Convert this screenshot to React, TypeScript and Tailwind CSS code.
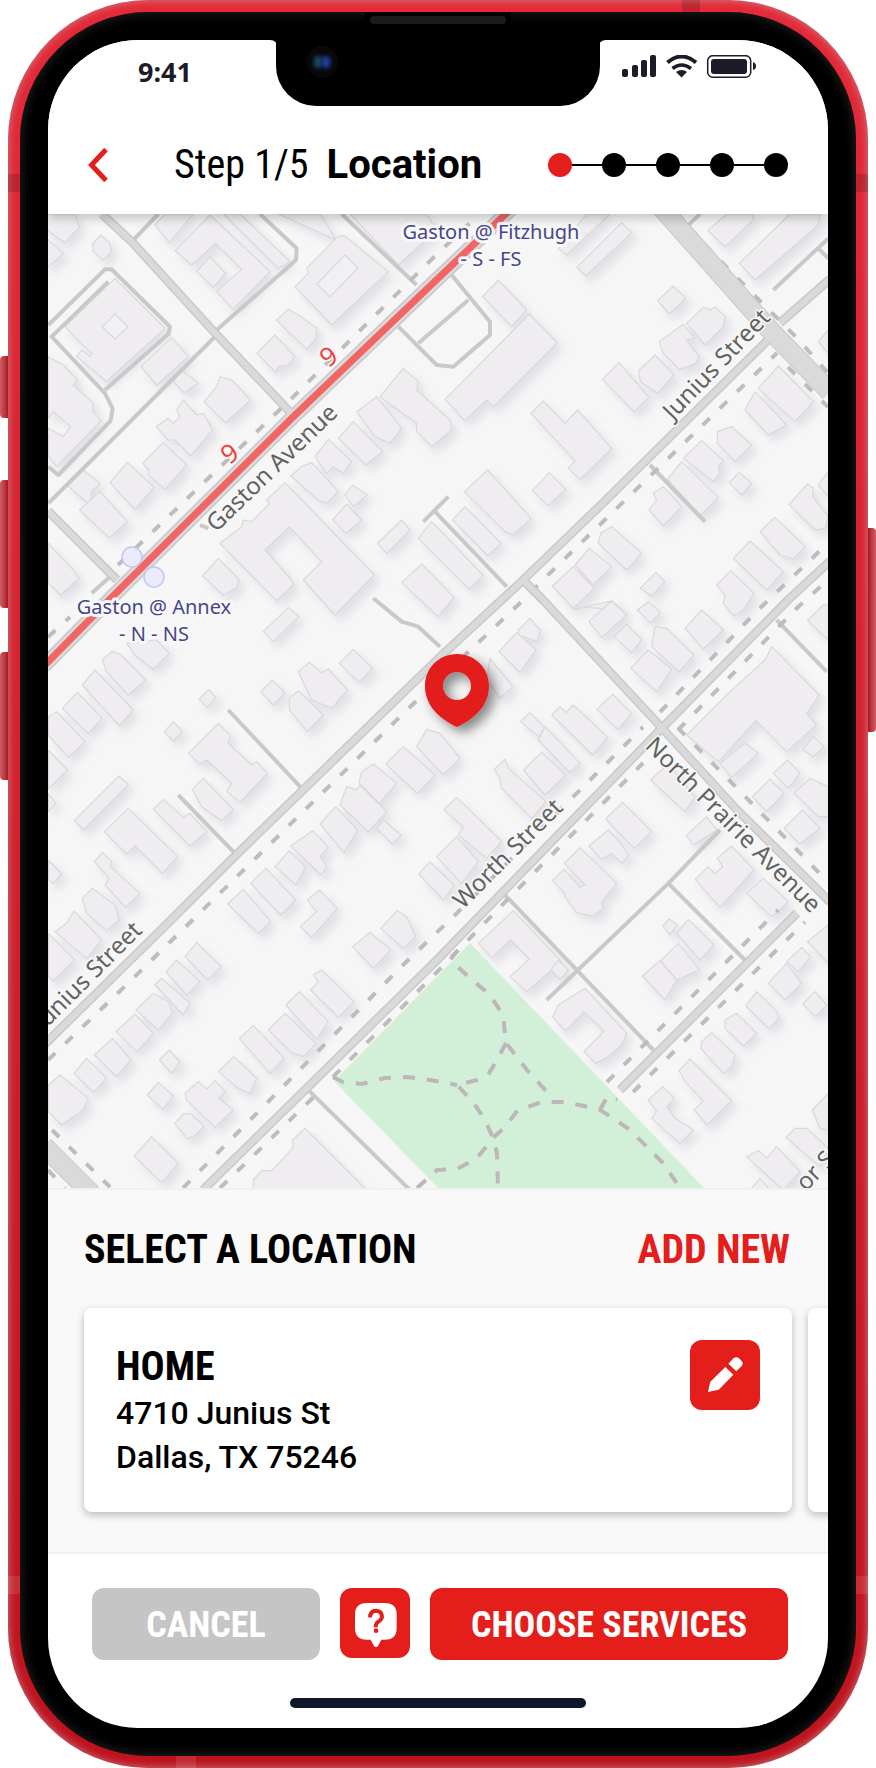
import React from "react";

const CONDENSED = "font-['Roboto_Condensed','Roboto',sans-serif]";

type Tile = { x: number; y: number; shapes: string[]; roads: string[] };

// Street blocks, one entry per map tile. Shapes are in tile units (3 per map unit).
const tiles: Tile[] = [
  {
    x: 40,
    y: 210,
    shapes: [
      "20,12 105,12 118,52 75,98 20,60",
      "20,85 70,130 20,175",
      "182,75 208,98 215,125 190,150 160,125 158,102",
      "225,205 375,355 215,500 200,515 110,440 125,420 150,440 158,430 122,400 75,350",
      "395,382 445,440 350,525 303,470",
      "425,480 475,520 432,548 400,515",
      "345,45 375,12 460,12 388,98",
      "510,15 690,185 580,298 530,245 605,178 527,100 455,165 405,122",
      "510,140 557,190 520,232 470,185",
      "600,12 750,155 715,175 550,12",
      "715,12 840,12 885,85 910,75 1045,185 875,345 765,230 805,190 800,175 885,88",
      "930,12 1160,12 1190,60 1075,165",
      "745,298 775,315 830,355 828,385 800,418 740,360 710,330",
      "705,375 765,440 745,465 715,470 708,488 650,430",
      "540,500 575,510 632,570 557,638 492,575 530,530",
      "430,570 470,615 490,610 518,660 452,738 405,690 385,690 348,650 385,625 400,640 420,620 410,600",
      "370,697 440,765 375,838 325,795 325,780 308,760",
      "262,757 342,832 285,898 210,818",
      "130,780 180,820 155,845 150,885 80,825",
      "180,845 262,935 208,983 118,900",
      "25,440 70,465 112,510 100,525 160,580 158,605 183,632 50,770 25,740 25,655 70,680 92,650 40,605 25,625",
      "25,1000 100,1080 118,1105 62,1155 25,1120",
      "1090,475 1135,515 1130,540 1230,630 1235,660 1175,710 1130,665 1130,640 1020,560",
      "1010,560 1085,655 1050,700 1005,680 950,605",
      "940,635 1028,725 978,765 895,685",
      "865,688 935,755 910,790 880,770 860,790 825,740",
      "815,758 895,845 860,880 835,870 752,798 785,770",
      "735,818 1003,1095 885,1215 790,1110 845,1055 748,950 675,1020 755,1110 760,1125 710,1172 540,1000 605,950 610,930 635,935 688,880 680,870",
      "937,825 982,855 940,890 915,855",
      "920,882 965,930 918,970 878,930",
      "535,1045 598,1110 588,1135 550,1155 488,1098",
      "1085,930 1110,960 1040,1030 1012,1000",
      "1145,1062 1242,1162 1195,1220 1085,1118",
    ],
    roads: [
      "25,345 195,178 215,178 390,350 385,372 195,540",
      "205,215 35,380 195,550 218,595 212,632 55,795 25,770",
      "660,12 770,115 768,150 530,360",
      "280,90 355,12",
      "905,12 1130,225",
      "525,380 440,465 25,880",
      "1075,350 1170,445 1190,465 1240,470 1350,375 1350,335 1235,195",
      "1135,400 1285,270",
      "1150,935 1225,860",
      "1185,905 1400,1130",
      "155,1150 210,1100",
      "480,945 505,955",
      "1000,1165 1085,1235 1135,1250 1200,1310",
    ],
  },
  {
    x: 430,
    y: 210,
    shapes: [
      "205,210 290,300 245,350 158,260",
      "298,312 382,398 190,590 170,570 105,632 45,568",
      "470,12 540,12 410,135 385,115",
      "575,38 605,68 468,198 440,172",
      "730,228 767,265 718,312 683,272",
      "820,292 840,300 855,290 885,320 880,350 825,405 770,340",
      "760,343 795,385 768,390 808,440 795,462 748,478 700,430 688,395",
      "675,435 732,495 682,550 632,515 625,482",
      "567,458 657,562 612,605 518,508",
      "340,573 405,640 443,600 545,715 450,808 415,775 435,752 303,610",
      "358,788 407,838 355,887 307,842",
      "173,780 303,925 250,975 225,965 103,845",
      "105,890 213,1000 173,1037 68,930",
      "5,935 160,1097 118,1138 -35,985",
      "545,950 635,1030 590,1080 505,1000 512,970",
      "478,1015 545,1070 490,1125 435,1065",
      "430,1070 493,1135 430,1195 367,1128",
      "678,1088 705,1115 665,1158 630,1135",
      "1045,468 1150,575 1095,635 985,535",
      "975,545 1070,645 1015,675 945,600",
      "905,650 965,705 915,755 862,700 862,665",
      "815,692 880,752 865,770 870,790 850,815 760,745",
      "755,755 865,862 810,918 712,808",
      "700,830 755,890 700,948 657,900 680,870 670,850",
      "928,787 965,820 935,855 897,818",
      "1133,822 1150,835 1148,860 1195,920 1185,955 1155,960 1077,883",
      "1035,922 1125,1010 1090,1047 1050,1035 990,965",
      "960,993 1060,1085 1010,1140 910,1045",
      "903,1082 972,1150 940,1200 910,1217 880,1180 885,1155 860,1125",
      "1080,12 1170,12 1165,45 975,210 928,160",
      "890,12 970,12 970,30 885,110 833,62",
      "1195,360 1165,395 1195,430",
      "1195,785 1165,825 1195,860",
      "545,1173 575,1200 435,1190 430,1198",
    ],
    roads: ["660,765 825,935", "1030,240 1195,85", "1165,115 1195,145", "770,50 810,12"],
  },
  {
    x: 40,
    y: 600,
    shapes: [
      "260,130 350,120 388,160 340,208 285,165",
      "215,155 240,162 317,240 265,285 200,215 187,180",
      "165,210 280,330 238,377 127,255",
      "112,277 187,355 145,400 67,325",
      "50,335 135,425 85,472 25,405 25,350",
      "25,450 82,510 25,568",
      "25,580 48,610 25,635",
      "25,780 65,822 40,850 25,840",
      "745,22 777,50 700,125 670,95",
      "940,148 998,205 957,247 898,190",
      "808,187 845,218 865,207 922,270 875,325 815,300 775,215",
      "775,272 850,345 802,395 748,330 748,295",
      "697,240 735,278 700,315 662,275",
      "507,268 527,293 503,323 477,298",
      "400,365 427,395 400,423 373,395",
      "535,370 570,405 565,430 635,495 650,485 682,520 600,607 560,575 575,550 500,480 480,493 445,460",
      "490,535 580,630 545,662 485,620 457,568",
      "370,598 430,652 450,640 500,695 450,738 340,628",
      "237,528 265,555 130,690 103,662",
      "265,625 413,770 367,820 285,738 260,762 193,695",
      "187,757 215,785 210,800 300,880 257,922 195,855 208,835 163,785",
      "157,865 225,915 238,960 200,992 140,940 127,895",
      "102,933 185,1020 140,1075 45,995 80,970",
      "25,1000 105,1080 40,1143 25,1130",
      "1160,388 1200,400 1260,475 1210,525 1130,440",
      "1090,440 1185,525 1132,580 1037,492",
      "1000,492 1070,550 1018,610 957,548 965,515",
      "920,560 950,570 960,555 1040,635 985,695 900,615",
      "887,620 953,690 912,758 840,672",
      "1030,660 1083,705 1058,733 1010,685",
      "818,692 865,742 840,770 860,800 843,825 752,738",
      "748,752 797,800 768,855 705,800",
      "678,805 767,900 722,945 632,850",
      "610,868 692,965 655,1000 563,912",
      "838,870 892,925 815,1012 780,980 830,935 802,900",
      "1072,932 1100,950 1127,1010 1090,1045 1022,985",
      "990,997 1053,1050 1000,1105 938,1040",
      "1170,785 1242,855 1210,900 1137,822",
      "470,1028 543,1100 503,1140 435,1070",
    ],
    roads: ["565,330 785,565", "415,585 585,760"],
  },
  {
    x: 430,
    y: 600,
    shapes: [
      "300,55 330,90 322,125 265,105 265,90",
      "260,98 318,150 270,218 207,155",
      "180,175 248,260 210,295 170,240",
      "300,338 345,385 325,410 272,365",
      "345,380 450,490 420,518 325,420",
      "335,457 408,525 345,585 280,510",
      "225,478 235,505 348,605 305,655 215,565 210,535 192,508",
      "430,315 533,412 488,465 365,345 390,320 408,338",
      "548,283 605,340 565,388 500,328",
      "80,592 215,725 170,775 85,705 100,680 42,630",
      "80,710 145,785 95,850 20,770",
      "545,3 590,45 515,112 477,65",
      "590,73 635,118 605,158 552,110",
      "655,5 692,38 660,68 622,30",
      "675,80 710,85 792,165 748,215 665,140",
      "655,150 725,208 680,275 602,205",
      "815,30 880,90 820,147 765,85",
      "1180,15 1195,15 1195,120 1132,62",
      "1025,140 1168,285 1130,340 1160,375 1070,455 978,362 865,485 770,405 900,275 1005,180",
      "945,430 985,460 905,533 870,490",
      "1150,410 1183,440 1150,470 1118,450",
      "1073,480 1110,520 1075,565 1030,520",
      "1020,537 1062,580 1010,635 967,590",
      "1140,535 1195,560 1195,650 1165,650 1092,580",
      "1118,630 1170,685 1110,732 1062,685",
      "715,490 795,590 765,635 662,540",
      "830,650 860,690 790,735 768,708",
      "578,607 665,695 613,745 527,657",
      "535,690 568,725 595,765 577,790 545,760 515,778 477,738",
      "450,743 560,850 515,905 520,925 490,948 440,938 405,890 405,880 367,842 402,808 450,862 465,855 403,790",
      "905,738 972,810 870,922 795,838 835,800 855,822 878,800 862,775",
      "1000,835 1075,905 1025,950 950,880",
      "775,958 852,1035 810,1080 740,1000",
      "718,957 742,975 720,1005 698,978",
      "745,1030 808,1110 740,1140 692,1082",
      "690,1082 740,1140 705,1200 637,1128",
      "250,932 395,1085 290,1175 240,1130 298,1077 242,1020 185,1072 145,1030",
      "1115,1042 1142,1070 1105,1115 1070,1085",
      "1070,1090 1115,1150 1065,1200 1015,1150",
      "1195,975 1132,1025 1195,1090",
    ],
    roads: ["1040,60 1190,215", "220,880 445,1115 670,1350", "870,690 715,850 350,1200", "715,850 945,1080"],
  },
  {
    x: 40,
    y: 960,
    shapes: [
      "410,0 480,65 440,105 378,35",
      "365,55 450,130 430,165 345,75",
      "340,100 385,125 397,160 355,210 288,150",
      "285,162 340,220 290,275 228,215",
      "218,235 273,300 230,350 163,285",
      "140,295 200,355 160,397 102,340",
      "60,345 145,415 130,450 65,495 25,455 25,375",
      "388,270 420,305 395,340 358,300",
      "355,367 400,408 368,448 322,405",
      "845,30 942,125 895,172 812,90 835,65 820,45",
      "778,95 865,185 830,238 738,135",
      "735,160 828,250 790,290 755,278 685,210",
      "640,197 733,295 690,340 598,235",
      "582,290 650,355 630,400 595,385 535,335",
      "475,365 500,388 525,362 557,395 535,415 580,450 525,502 440,420 435,400",
      "430,460 455,462 492,500 460,530 440,535 405,490",
      "335,530 415,610 365,668 283,588",
      "795,505 980,690 640,690 640,660 665,632 695,632 758,565 758,540",
    ],
    roads: ["800,385 1110,690"],
  },
  {
    x: 430,
    y: 900,
    shapes: [
      "465,265 590,400 575,435 535,470 497,490 462,455 522,393 462,335 405,393 368,350 385,315",
      "385,180 415,210 390,238 363,210",
      "1155,275 1190,315 1158,350 1118,312",
      "980,275 1040,335 1045,355 1018,387 947,318",
      "920,340 980,400 940,438 885,385 885,360",
      "845,398 915,465 905,500 880,520 812,445 815,425",
      "780,477 905,602 832,675 792,630 820,602 765,545 747,512",
      "698,560 733,595 710,620 735,655 790,690 750,730 665,655 680,635 655,600",
      "1195,580 1147,630 1170,685 1195,690",
      "1095,685 1130,685 1195,745 1170,800 1068,712",
      "1040,740 1110,815 1060,870 950,770 985,752 1010,775",
      "990,835 1020,870 960,870",
    ],
    roads: [],
  },
];

const courtyards = ["115,314 128,327 115,339 102,327", "345,255 358,268 330,297 317,284"];

const streets = [
  "102,214 133,243 215,333 290,412",
  "48,511 117,580",
  "44,1045 165,926 235,856 302,791 440,657 520,583 603,503 773,335",
  "203,1190 307,1088 437,960 662,728 788,600 830,561",
  "620,1090 797,913",
  "523,580 543,600 662,728 737,810 815,887 830,902",
  "780,323 830,279",
];

const avenues = ["660,206 770,330 830,392", "44,1146 92,1194"];

const gaston = "44,666 106,603 293,417 430,286 512,208";

const sidewalks = [
  "118,565 295,395 433,258 475,218",
  "48,637 70,617",
  "48,1060 118,993 410,707 518,605 550,573 777,353",
  "788,367 828,407",
  "687,227 757,298 797,338 828,373",
  "183,1188 403,965 455,915 643,727",
  "660,712 758,610 828,543",
  "220,1188 323,1088",
  "333,1077 437,972 507,900 643,763",
  "678,730 798,607 828,580",
  "678,728 732,783 800,853 823,877",
  "607,1082 778,910",
  "633,1092 805,922",
  "52,1130 110,1187",
  "48,1170 65,1188",
];

const parkPaths = [
  "333,1077 343,1082 362,1084 385,1078 407,1077 430,1080 457,1085",
  "458,950 450,960 470,978 490,995 503,1015 506,1043 527,1070 547,1092 554,1099",
  "506,1043 497,1060 488,1075 477,1080 457,1085 473,1102 485,1120 493,1138 497,1153 498,1188",
  "417,1188 437,1170 457,1169 477,1158 493,1138 505,1127 518,1110 542,1102 565,1102 588,1107 600,1110 613,1118 630,1130 647,1147 663,1163 678,1185",
  "600,1110 607,1097 617,1100",
];

const streetNames = [
  { text: "Gaston Avenue", x: 216, y: 533, angle: -44 },
  { text: "Junius Street", x: 673, y: 421, angle: -46 },
  { text: "Worth Street", x: 463, y: 910, angle: -45 },
  { text: "North Prairie Avenue", x: 644, y: 747, angle: 45 },
  { text: "Junius Street", x: 43, y: 1032, angle: -45 },
  { text: "or Street", x: 806, y: 1192, angle: -46 },
];

const stops = [
  { name: "Gaston @ Fitzhugh", suffix: "- S - FS", x: 491, y: 239 },
  { name: "Gaston @ Annex", suffix: "- N - NS", x: 154, y: 614 },
];

function StreetMap() {
  return (
    <svg
      viewBox="48 214 780 974"
      preserveAspectRatio="xMidYMid slice"
      className="block h-full w-full font-['Noto_Sans',sans-serif]"
      role="img"
      aria-label="Map around 4710 Junius St"
    >
      <defs>
        <filter id="soft" x="-5%" y="-5%" width="110%" height="110%">
          <feDropShadow dx="16" dy="18" stdDeviation="12" floodColor="#9a9ab8" floodOpacity="0.24" />
        </filter>
        <filter id="pin-shadow" x="-50%" y="-50%" width="220%" height="220%">
          <feDropShadow dx="6" dy="6" stdDeviation="6" floodColor="#000" floodOpacity="0.45" />
        </filter>
      </defs>
      <rect x="48" y="214" width="780" height="974" fill="#f6f6f6" />
      {tiles.map((t) => (
        <g key={`${t.x}-${t.y}`} transform={`translate(${t.x} ${t.y}) scale(0.33333)`} filter="url(#soft)">
          {t.shapes.map((s) => (
            <polygon key={s} points={s} fill="#efedef" stroke="#dad8da" strokeWidth="3.5" strokeLinejoin="round" />
          ))}
        </g>
      ))}
      {courtyards.map((c) => (
        <polygon key={c} points={c} fill="#f1f1f3" stroke="#dad8da" strokeWidth="1.2" />
      ))}
      <polygon points="470,943 706,1190 440,1190 334,1081" fill="#d2f0d7" />
      {tiles.map((t) => (
        <g
          key={`${t.x}-${t.y}`}
          transform={`translate(${t.x} ${t.y}) scale(0.33333)`}
          fill="none"
          stroke="#c9c9c9"
          strokeWidth="12"
          strokeLinejoin="round"
        >
          {t.roads.map((r) => (
            <polyline key={r} points={r} />
          ))}
        </g>
      ))}
      <g fill="none" stroke="#bdbdbd" strokeWidth="4" strokeDasharray="10 14">
        {sidewalks.map((s) => (
          <polyline key={s} points={s} />
        ))}
      </g>
      <g fill="none" stroke="#bdb6ba" strokeWidth="4" strokeDasharray="12 12">
        {parkPaths.map((s) => (
          <polyline key={s} points={s} />
        ))}
      </g>
      <g fill="none" stroke="#c9c9c9" strokeLinejoin="round">
        {streets.map((s) => (
          <polyline key={s} points={s} strokeWidth="9" />
        ))}
        {avenues.map((s) => (
          <polyline key={s} points={s} strokeWidth="20" />
        ))}
        <polyline points={gaston} strokeWidth="15" />
      </g>
      <g fill="none" stroke="#dadada" strokeLinejoin="round">
        {streets.map((s) => (
          <polyline key={s} points={s} strokeWidth="6" />
        ))}
        {avenues.map((s) => (
          <polyline key={s} points={s} strokeWidth="18" />
        ))}
        <polyline points={gaston} strokeWidth="12" />
      </g>
      <polyline points={gaston} fill="none" stroke="#f16565" strokeWidth="7" />
      <g fill="#ebebfc" stroke="#c5c5f4" strokeWidth="1.5">
        <circle cx="132" cy="557" r="10" />
        <circle cx="154" cy="577" r="10" />
      </g>
      <g stroke="#f8f8f8" strokeWidth="3" strokeLinejoin="round" paintOrder="stroke">
        {streetNames.map((n) => (
          <text key={`${n.text}${n.x}`} transform={`translate(${n.x} ${n.y}) rotate(${n.angle})`} fontSize="24" fill="#626262">
            {n.text}
          </text>
        ))}
        <g fontSize="26" fill="#ef4040" textAnchor="middle">
          <text transform="translate(334 364) rotate(-36)">9</text>
          <text transform="translate(235 461) rotate(-36)">9</text>
        </g>
        <g fontSize="20" fill="#46468a" textAnchor="middle" strokeWidth="6">
          {stops.map((s) => (
            <text key={s.name} x={s.x} y={s.y}>
              {s.name}
              <tspan x={s.x} dy="27">
                {s.suffix}
              </tspan>
            </text>
          ))}
        </g>
      </g>
      <path
        d="M457 654c-18 0-32 14-32 32 0 20 15 33 32 41 17-8 32-21 32-41 0-18-14-32-32-32zm0 18a14 14 0 1 1 0 28 14 14 0 0 1 0-28z"
        fill="#e31e1b"
        fillRule="evenodd"
        filter="url(#pin-shadow)"
      />
    </svg>
  );
}

function StatusIcons() {
  return (
    <svg viewBox="0 0 136 24" className="h-6 w-[136px]" aria-hidden="true">
      <g fill="#1c1c28">
        <rect x="0" y="14" width="6" height="8" rx="2" />
        <rect x="10" y="10" width="6" height="12" rx="2" />
        <rect x="19" y="5" width="6" height="17" rx="2" />
        <rect x="28" y="0" width="6" height="22" rx="2" />
        <path d="M54 17q6-4 11 0l-5.500 5.500z" />
        <rect x="89" y="4" width="36" height="15" rx="3" />
        <path d="M131 7q3 1 3 4t-3 4z" />
      </g>
      <g fill="none" stroke="#1c1c28">
        <path d="M45.500 7.500q14-12 28.500 0" strokeWidth="4" />
        <path d="M50.500 13.500q9-7 18.500 0" strokeWidth="3.600" />
        <rect x="85.700" y="0.700" width="43" height="21.600" rx="5" strokeWidth="1.500" />
      </g>
    </svg>
  );
}

function Notch() {
  return (
    <div className="absolute top-0 left-1/2 z-30 h-[66px] w-[324px] -translate-x-1/2 rounded-b-[40px] bg-black">
      <svg viewBox="0 0 336 8" className="absolute top-0 -left-1.5 h-2 w-[336px]" aria-hidden="true">
        <path d="M0 0h8v8Q7 0 0 0zM336 0h-8v8q1-8 8-8z" fill="#000" />
      </svg>
      <div className="absolute top-1.5 left-[30px] flex size-8 items-center justify-center rounded-full bg-[#08080a]">
        <span className="h-3 w-2 rounded-full bg-[#1b4a66] blur-[2px]" />
        <span className="h-3 w-2 rounded-full bg-[#2440a8] blur-[2px]" />
      </div>
    </div>
  );
}

function Steps() {
  return (
    <ol className="flex items-center" aria-label="Step 1 of 5">
      {[1, 2, 3, 4, 5].map((n) => (
        <li key={n} className="flex items-center">
          {n > 1 && <span className="h-0.5 w-[30px] bg-black" />}
          <span className={n === 1 ? "size-6 rounded-full bg-[#e31e1b]" : "size-6 rounded-full bg-black"} />
        </li>
      ))}
    </ol>
  );
}

export default function App() {
  const card =
    "flex w-full shrink-0 items-start justify-between rounded-lg bg-white p-8 shadow-[0_3px_8px_rgba(0,0,0,0.25)]";
  const action = "h-[72px] rounded-xl pt-0.5 text-4xl font-bold text-white " + CONDENSED;
  return (
    <div className="relative min-h-screen bg-white px-2 font-['Roboto',sans-serif] text-black">
      <span className="absolute top-[356px] left-0 h-[62px] w-2 rounded-l bg-linear-to-r from-[#cf5d67] to-[#a81520]" />
      <span className="absolute top-[480px] left-0 h-32 w-2 rounded-l bg-linear-to-r from-[#cf5d67] to-[#a81520]" />
      <span className="absolute top-[652px] left-0 h-32 w-2 rounded-l bg-linear-to-r from-[#cf5d67] to-[#a81520]" />
      <span className="absolute top-[528px] right-0 h-[204px] w-2 rounded-r bg-linear-to-l from-[#cf5d67] to-[#a81520]" />

      <div className="relative rounded-[140px] bg-linear-to-b from-[#e52a39] to-[#bf131e] p-3 shadow-[inset_0_0_7px_1px_rgba(190,150,155,0.7)]">
        <span className="absolute top-[174px] left-0 h-[18px] w-3 bg-black/15" />
        <span className="absolute top-[174px] right-0 h-[18px] w-3 bg-black/15" />
        <span className="absolute top-0 right-[168px] h-3 w-[18px] bg-black/15" />
        <span className="absolute bottom-[174px] left-0 h-[18px] w-3 bg-white/10" />
        <span className="absolute right-0 bottom-[174px] h-[18px] w-3 bg-white/10" />
        <span className="absolute bottom-0 left-[168px] h-3 w-5 bg-white/10" />
        <div className="relative rounded-[128px] bg-black p-7 shadow-[inset_0_0_12px_0_rgba(50,50,50,0.8)]">
          <div className="absolute top-0 left-1/2 flex h-[18px] w-[146px] -translate-x-1/2 items-center justify-center rounded-b-lg bg-black">
            <span className="-mt-0.5 h-2 w-[136px] rounded-full bg-[#1b1b1b]" />
          </div>

          <main className="relative overflow-hidden rounded-[90px] bg-white">
            <Notch />
            <div className="relative z-20 flex h-[66px] items-start justify-between bg-white pr-[70px] pl-[90px]">
              <time className="pt-3 font-['Noto_Sans',sans-serif] text-[27px] leading-10 font-bold text-[#1c1c28]">9:41</time>
              <div className="pt-[15px]">
                <StatusIcons />
              </div>
            </div>

            <header className="relative z-10 flex h-[108px] items-center bg-white pt-2.5 pr-10 pl-10 shadow-[0_4px_10px_rgba(0,0,0,0.22)]">
              <button type="button" aria-label="Back" className="flex h-12 w-[86px] shrink-0 items-center">
                <svg viewBox="0 0 22 34" className="h-[34px] w-[22px]" fill="none" stroke="#e31e1b" strokeWidth="5">
                  <path d="M18 1.500 3.500 17 18 32.500" />
                </svg>
              </button>
              <h1 className="flex flex-1 items-baseline gap-[18px] text-[40px] leading-12 whitespace-nowrap">
                <span className={CONDENSED}>Step 1/5</span>
                <span className="font-bold">Location</span>
              </h1>
              <Steps />
            </header>

            <div className="aspect-[780/974] w-full">
              <StreetMap />
            </div>

            <section className="border-t-2 border-[#f0f0f0] bg-[#f9f9f9] px-9 pt-9 pb-10">
              <div className={"flex items-center justify-between pr-0.5 text-[40px] leading-12 font-bold " + CONDENSED}>
                <h2>SELECT A LOCATION</h2>
                <button type="button" className="text-[#e31e1b]">
                  ADD NEW
                </button>
              </div>
              <div className="mt-[34px] flex gap-4">
                <article className={card}>
                  <div className="pt-[3px] pb-px text-[32px] leading-11 font-medium">
                    <h3 className={"text-[40px] leading-12 font-bold " + CONDENSED}>HOME</h3>
                    <p>
                      4710 Junius St
                      <br />
                      Dallas, TX 75246
                    </p>
                  </div>
                  <button
                    type="button"
                    aria-label="Edit location"
                    className="size-[70px] shrink-0 rounded-xl bg-[#e31e1b]"
                  >
                    <svg viewBox="0 0 210 210" className="size-full" fill="#fff">
                      <path d="M106 81 130 104 86 149 54 156 61 125z" />
                      <path d="M115 71 131 55Q138 49 146 54L155 63Q161 71 155 78L139 94z" />
                    </svg>
                  </button>
                </article>
                <article className={card} aria-hidden="true" />
              </div>
            </section>

            <footer className="border-t-2 border-[#f0f0f0] pt-[34px] pb-5">
              <div className="flex items-start gap-5 pr-10 pl-11">
                <button type="button" className={"flex-[228_1_0%] bg-[#c5c5c5] " + action}>
                  CANCEL
                </button>
                <button type="button" aria-label="Help" className="size-[70px] shrink-0 rounded-xl bg-[#e31e1b]">
                  <svg viewBox="0 0 210 210" className="size-full" fill="#fff">
                    <path d="M80 45H135Q170 45 170 80V120Q170 155 135 155H124L114 174Q108 180 102 174L92 155H80Q45 155 45 120V80Q45 45 80 45z" />
                    <path
                      d="M90 88Q91 68 108 68 126 69 126 86 125 96 115 101 107 106 107 118"
                      fill="none"
                      stroke="#e31e1b"
                      strokeWidth="12"
                    />
                    <circle cx="108" cy="128" r="7" fill="#e31e1b" />
                  </svg>
                </button>
                <button type="button" className={"flex-[358_1_0%] bg-[#e31e1b] " + action}>
                  CHOOSE SERVICES
                </button>
              </div>
              <div className="mx-auto mt-[38px] h-2.5 w-[296px] rounded-full bg-[#0f172a]" />
            </footer>
          </main>
        </div>
      </div>
    </div>
  );
}
